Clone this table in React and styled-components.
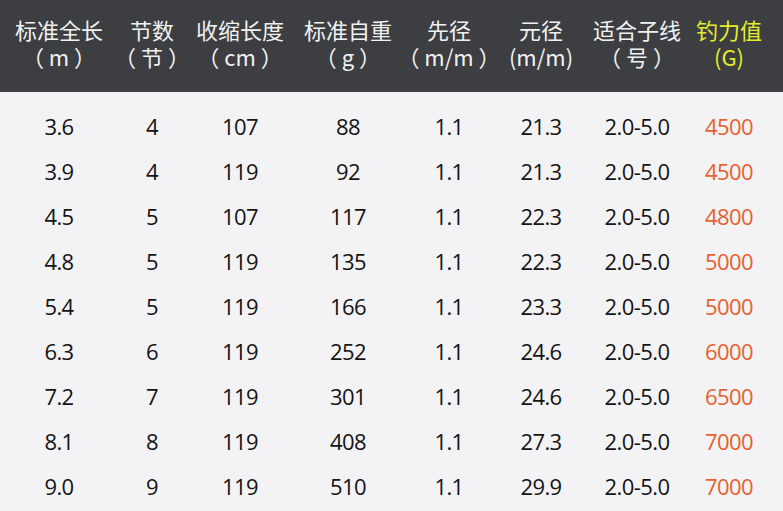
import React from 'react'
import styled, { createGlobalStyle } from 'styled-components'

const GlobalStyle = createGlobalStyle`
  html, body {
    margin: 0;
    padding: 0;
    background: #f3f2f5;
  }
`

const COLS = '98px 88px 88px 128px 74px 110px 82px 102px'

const Page = styled.div`
  width: 783px;
  height: 511px;
  overflow: hidden;
  background: #f3f2f5;
`

const Head = styled.div`
  height: 92px;
  background: #3d3e42;
  display: grid;
  grid-template-columns: ${COLS};
  padding-left: 10px;
  align-items: center;
`

const HeadCell = styled.div`
  display: flex;
  flex-direction: column;
  align-items: center;
  gap: 0;
  font-family: "Noto Sans CJK SC", "Noto Sans", sans-serif;
  font-size: 22px;
  line-height: 27px;
  color: ${({ $hl }) => ($hl ? '#e4ec2c' : '#f1f1f1')};
  white-space: nowrap;
  padding-bottom: 6px;
`

const Body = styled.div`
  padding-top: 11px;
`

const Row = styled.div`
  height: 45px;
  display: grid;
  grid-template-columns: ${COLS};
  padding-left: 10px;
  align-items: center;
`

const Cell = styled.div`
  display: flex;
  justify-content: center;
  font-family: "Open Sans", "Noto Sans", sans-serif;
  font-size: 22px;
  letter-spacing: -0.6px;
  color: ${({ $hl }) => ($hl ? '#e8612d' : '#141414')};
  white-space: nowrap;
`

const heads = [
  ['标准全长', '（ m ）'],
  ['节数', '（ 节 ）'],
  ['收缩长度', '（ cm ）'],
  ['标准自重', '（ g ）'],
  ['先径', '（ m/m ）'],
  ['元径', '(m/m)'],
  ['适合子线', '（ 号 ）'],
  ['钓力值', '(G)'],
]

const rows = [
  ['3.6', '4', '107', '88', '1.1', '21.3', '2.0-5.0', '4500'],
  ['3.9', '4', '119', '92', '1.1', '21.3', '2.0-5.0', '4500'],
  ['4.5', '5', '107', '117', '1.1', '22.3', '2.0-5.0', '4800'],
  ['4.8', '5', '119', '135', '1.1', '22.3', '2.0-5.0', '5000'],
  ['5.4', '5', '119', '166', '1.1', '23.3', '2.0-5.0', '5000'],
  ['6.3', '6', '119', '252', '1.1', '24.6', '2.0-5.0', '6000'],
  ['7.2', '7', '119', '301', '1.1', '24.6', '2.0-5.0', '6500'],
  ['8.1', '8', '119', '408', '1.1', '27.3', '2.0-5.0', '7000'],
  ['9.0', '9', '119', '510', '1.1', '29.9', '2.0-5.0', '7000'],
]

export default function App() {
  return (
    <Page>
      <GlobalStyle />
      <Head>
        {heads.map(([a, b], i) => (
          <HeadCell key={a} $hl={i === 7}>
            <span>{a}</span>
            <span>{b}</span>
          </HeadCell>
        ))}
      </Head>
      <Body>
        {rows.map((r, ri) => (
          <Row key={ri}>
            {r.map((v, i) => (
              <Cell key={i} $hl={i === 7}>{v}</Cell>
            ))}
          </Row>
        ))}
      </Body>
    </Page>
  )
}
